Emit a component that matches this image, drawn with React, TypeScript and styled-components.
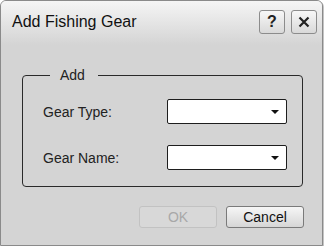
import styled, { createGlobalStyle } from 'styled-components';

const GlobalStyle = createGlobalStyle`
  html, body {
    margin: 0;
    padding: 0;
    background: #ffffff;
  }
  body {
    font-family: "Liberation Sans", Arial, sans-serif;
  }
`;

const Window = styled.div`
  box-sizing: border-box;
  width: 323px;
  height: 246px;
  border: 1px solid #8a8a8a;
  border-radius: 6px 6px 0 0;
  background: #d4d4d4;
  box-shadow: 1px 1px 0 #c4c4c4;
  display: flex;
  flex-direction: column;
  overflow: hidden;
`;

const TitleBar = styled.div`
  display: flex;
  align-items: center;
  justify-content: space-between;
  height: 44px;
  padding: 0 5px 0 11px;
  background: linear-gradient(#f5f5f5 0%, #e6e6e6 45%, #d4d4d4 100%);
`;

const Title = styled.div`
  font-size: 16px;
  color: #111;
  margin-top: -3px;
`;

const TitleButtons = styled.div`
  display: flex;
  gap: 6px;
  margin-top: -2px;
`;

const IconButton = styled.button`
  box-sizing: border-box;
  width: 26px;
  height: 24px;
  padding: 0;
  border: 1px solid #8c8c8c;
  border-radius: 3px;
  background: linear-gradient(#f7f7f7, #d9d9d9);
  display: flex;
  align-items: center;
  justify-content: center;
  font-family: "Liberation Sans", Arial, sans-serif;
  font-size: 16px;
  font-weight: bold;
  color: #222;
`;

const Group = styled.fieldset`
  box-sizing: border-box;
  margin: 22px 0 0 21px;
  width: 281px;
  height: 120px;
  padding: 16px 0 0 20px;
  border: 1px solid #2a2a2a;
  border-radius: 4px;
  display: grid;
  grid-template-columns: 124px 120px;
  grid-auto-rows: 25px;
  row-gap: 21px;
  align-items: center;
  align-content: start;
`;

const Legend = styled.legend`
  margin-left: 7px;
  padding: 0 13px 0 10px;
  font-size: 14px;
  line-height: 16px;
  color: #222;
`;

const Label = styled.label`
  font-size: 14px;
  color: #222;
`;

const Select = styled.div`
  box-sizing: border-box;
  height: 25px;
  border: 1px solid #1e1e1e;
  border-radius: 2px;
  background: #fff;
  display: flex;
  align-items: center;
  justify-content: flex-end;
  padding-right: 7px;
`;

const Arrow = styled.span`
  width: 0;
  height: 0;
  border-left: 4px solid transparent;
  border-right: 4px solid transparent;
  border-top: 4px solid #111;
`;

const Footer = styled.div`
  display: flex;
  justify-content: flex-end;
  gap: 9px;
  padding: 19px 18px 0 0;
`;

const DialogButton = styled.button<{ $disabled?: boolean }>`
  box-sizing: border-box;
  width: 78px;
  height: 22px;
  padding: 0;
  border-radius: 3px;
  font-family: "Liberation Sans", Arial, sans-serif;
  font-size: 14px;
  border: 1px solid ${(p) => (p.$disabled ? '#c2c2c2' : '#7a7a7a')};
  color: ${(p) => (p.$disabled ? '#a8a8a8' : '#111')};
  background: ${(p) =>
    p.$disabled ? '#d8d8d8' : 'linear-gradient(#f6f6f6, #d6d6d6)'};
`;

export default function App() {
  return (
    <>
      <GlobalStyle />
      <Window>
        <TitleBar>
          <Title>Add Fishing Gear</Title>
          <TitleButtons>
            <IconButton>?</IconButton>
            <IconButton>
              <svg width="12" height="12" viewBox="0 0 12 12">
                <path d="M1.5 1.5 L10.5 10.5 M10.5 1.5 L1.5 10.5" stroke="#222" strokeWidth="2.2" />
              </svg>
            </IconButton>
          </TitleButtons>
        </TitleBar>
        <Group>
          <Legend>Add</Legend>
          <Label>Gear Type:</Label>
          <Select>
            <Arrow />
          </Select>
          <Label>Gear Name:</Label>
          <Select>
            <Arrow />
          </Select>
        </Group>
        <Footer>
          <DialogButton $disabled disabled>
            OK
          </DialogButton>
          <DialogButton>Cancel</DialogButton>
        </Footer>
      </Window>
    </>
  );
}
